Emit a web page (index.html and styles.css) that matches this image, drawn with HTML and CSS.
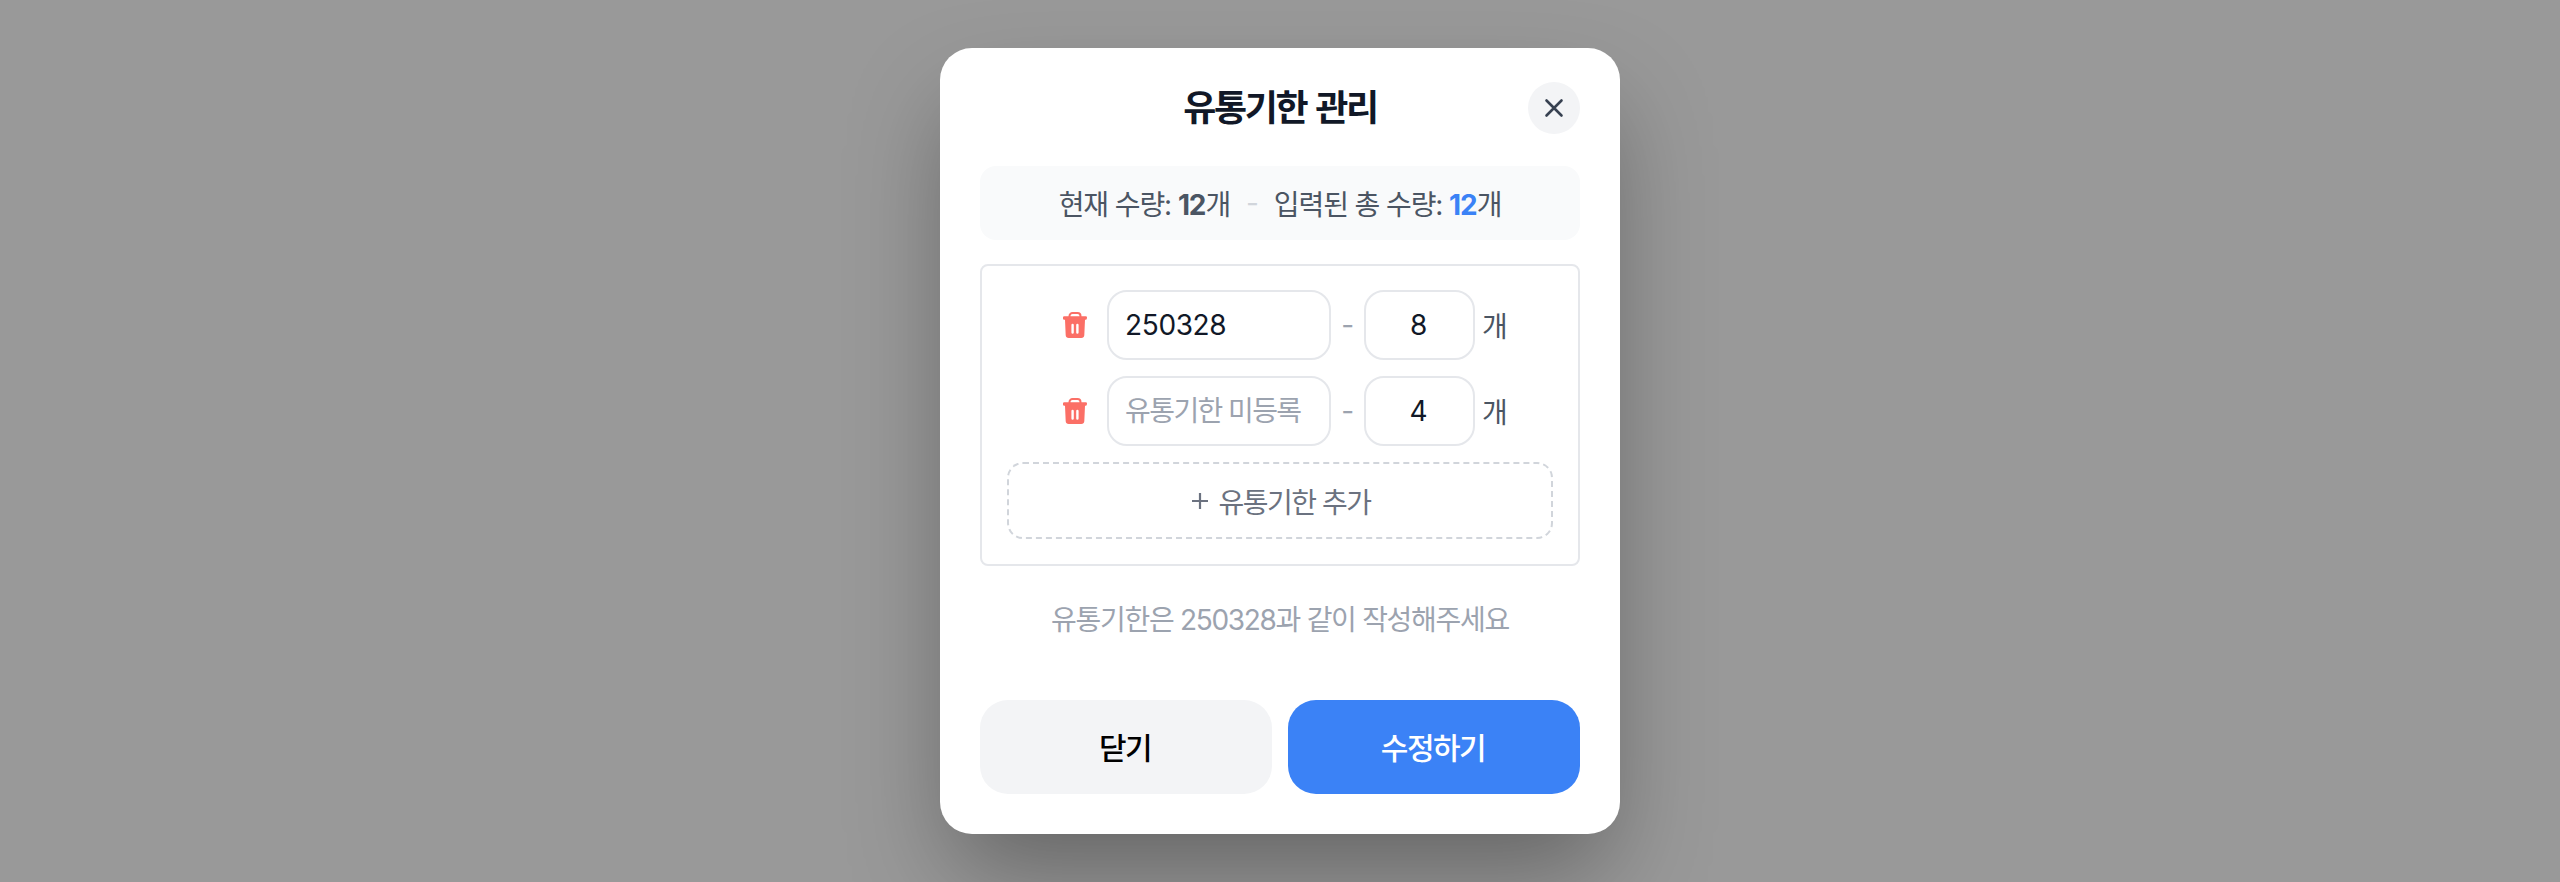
FILE: index.html
```html
<!DOCTYPE html>
<html lang="ko">

<head>
  <meta charset="UTF-8">
  <meta name="viewport" content="width=device-width, initial-scale=1.0">
  <title>유통기한 관리</title>
  <link rel="stylesheet" href="styles.css">
</head>

<body>
  <div class="overlay">
    <div class="modal">
      <header class="modal-header">
        <h2>유통기한 관리</h2>
        <button class="close-btn" aria-label="닫기">
          <svg width="24" height="24" viewBox="0 0 24 24" fill="none" stroke="#374151" stroke-width="2.6" stroke-linecap="round">
            <path d="M4.5 4.5 19.5 19.5M19.5 4.5 4.5 19.5" />
          </svg>
        </button>
      </header>

      <div class="summary">
        <span>현재 수량: <b>12</b>개</span>
        <span class="summary-sep">-</span>
        <span>입력된 총 수량: <b class="total">12</b>개</span>
      </div>

      <div class="date-box">
        <div class="date-row">
          <button class="trash-btn" aria-label="삭제">
            <svg width="24" height="27" viewBox="0 0 24 27">
              <path class="trash-handle" d="M6.5 5.5V4a3 3 0 0 1 3-3h5a3 3 0 0 1 3 3v1.5" />
              <path class="trash-body" fill-rule="evenodd" d="M1.2 4.2h21.6a1.2 1.2 0 0 1 1.2 1.3l-.2 1.2a1.2 1.2 0 0 1-1.1 1H22l-.7 15.6a3 3 0 0 1-3 2.7H5.7a3 3 0 0 1-3-2.7L2 7.7h-.9a1.2 1.2 0 0 1-1.1-1L0 5.500a1.200 1.200 0 0 1 1.200-1.300ZM8.400 13v7.500a1.200 1.200 0 0 0 2.400 0V13a1.200 1.200 0 0 0-2.400 0Zm4.800 0v7.500a1.200 1.200 0 0 0 2.400 0V13a1.200 1.200 0 0 0-2.400 0Z" />
            </svg>
          </button>
          <input class="date-input" type="text" value="250328" placeholder="유통기한 미등록">
          <span class="dash">-</span>
          <input class="qty-input" type="text" value="8">
          <span class="unit">개</span>
        </div>
        <div class="date-row">
          <button class="trash-btn" aria-label="삭제">
            <svg width="24" height="27" viewBox="0 0 24 27">
              <path class="trash-handle" d="M6.5 5.5V4a3 3 0 0 1 3-3h5a3 3 0 0 1 3 3v1.5" />
              <path class="trash-body" fill-rule="evenodd" d="M1.2 4.2h21.6a1.2 1.2 0 0 1 1.2 1.3l-.2 1.2a1.2 1.2 0 0 1-1.1 1H22l-.7 15.6a3 3 0 0 1-3 2.7H5.7a3 3 0 0 1-3-2.7L2 7.7h-.9a1.2 1.2 0 0 1-1.1-1L0 5.500a1.200 1.200 0 0 1 1.200-1.300ZM8.400 13v7.500a1.200 1.200 0 0 0 2.400 0V13a1.200 1.200 0 0 0-2.400 0Zm4.800 0v7.500a1.200 1.200 0 0 0 2.400 0V13a1.200 1.200 0 0 0-2.400 0Z" />
            </svg>
          </button>
          <input class="date-input" type="text" value="" placeholder="유통기한 미등록">
          <span class="dash">-</span>
          <input class="qty-input" type="text" value="4">
          <span class="unit">개</span>
        </div>
        <button class="add-btn">
          <svg width="20" height="20" viewBox="0 0 20 20" fill="none" stroke="#6b7280" stroke-width="2.2">
            <path d="M10 2V18M2 10H18" />
          </svg>
          유통기한 추가
        </button>
      </div>

      <p class="hint">유통기한은 250328과 같이 작성해주세요</p>

      <div class="actions">
        <button class="btn btn-close">닫기</button>
        <button class="btn btn-save">수정하기</button>
      </div>
    </div>
  </div>
</body>

</html>
```

FILE: styles.css
```css
/* Basic Reset */
* {
  margin: 0;
  padding: 0;
  box-sizing: border-box;
}

body {
  font-family: 'Inter', 'Noto Sans CJK KR', sans-serif;
  background-color: #fff;
}

button,
input {
  font-family: inherit;
}

/* Modal */
.overlay {
  height: 100vh;
  display: flex;
  align-items: center;
  justify-content: center;
  background-color: rgba(0, 0, 0, 0.4);
}

.modal {
  width: 680px;
  height: 786px;
  padding: 34px 40px 40px;
  background-color: #fff;
  border-radius: 32px;
  box-shadow: 0 48px 100px -12px rgba(0, 0, 0, 0.35);
  display: flex;
  flex-direction: column;
}

.modal-header {
  display: flex;
  align-items: center;
  justify-content: center;
  position: relative;
  height: 52px;
  margin-bottom: 32px;
}

.modal-header h2 {
  padding-bottom: 7px;
  font-size: 36px;
  font-weight: 700;
  letter-spacing: -2.4px;
  word-spacing: 3px;
  color: #111827;
}

.close-btn {
  position: absolute;
  right: 0;
  top: 0;
  width: 52px;
  height: 52px;
  border: none;
  border-radius: 50%;
  background-color: #f3f4f6;
  display: flex;
  align-items: center;
  justify-content: center;
}

/* Quantity summary */
.summary {
  height: 74px;
  margin-bottom: 24px;
  border-radius: 16px;
  background-color: #f9fafb;
  display: flex;
  align-items: center;
  justify-content: center;
  gap: 16px;
  font-size: 28px;
  letter-spacing: -1.1px;
  color: #4b5563;
}

.summary b {
  font-weight: 700;
}

.summary .total {
  color: #3b82f6;
}

.summary-sep {
  color: #d1d5db;
}

/* Date rows */
.date-box {
  height: 302px;
  border: 2px solid #e5e7eb;
  border-radius: 8px;
  padding: 24px 25px;
  display: flex;
  flex-direction: column;
  gap: 16px;
}

.date-row {
  display: flex;
  align-items: center;
  justify-content: center;
}

.trash-btn {
  width: 46px;
  height: 42px;
  margin-right: 9px;
  border: none;
  background: none;
  display: flex;
  align-items: center;
  justify-content: center;
}

.trash-handle {
  fill: none;
  stroke: #fb6f66;
  stroke-width: 2;
}

.trash-body {
  fill: #fb6f66;
}

.date-input,
.qty-input {
  height: 70px;
  border: 2px solid #e5e7eb;
  border-radius: 20px;
  font-size: 28px;
  color: #111827;
  outline: none;
  background-color: #fff;
}

.date-input {
  width: 224px;
  padding: 0 16px;
  letter-spacing: -0.4px;
}

.date-input::placeholder {
  color: #9ca3af;
  opacity: 1;
  letter-spacing: -1.6px;
}

.qty-input {
  width: 111px;
  padding-right: 2px;
  text-align: center;
}

.dash {
  width: 33px;
  text-align: center;
  font-size: 28px;
  color: #9ca3af;
}

.unit {
  margin-left: 7px;
  font-size: 28px;
  color: #4b5563;
}

.add-btn {
  height: 77px;
  border: 2px dashed #d1d5db;
  border-radius: 16px;
  background: none;
  display: flex;
  align-items: center;
  justify-content: center;
  gap: 9px;
  font-size: 28px;
  letter-spacing: -1.5px;
  color: #6b7280;
}

/* Hint */
.hint {
  margin-top: 33px;
  text-align: center;
  font-size: 28px;
  line-height: 42px;
  letter-spacing: -1.3px;
  color: #9ca3af;
}

/* Footer buttons */
.actions {
  margin-top: auto;
  display: flex;
  gap: 16px;
}

.btn {
  flex: 1;
  height: 94px;
  padding-bottom: 3px;
  padding-right: 2px;
  border: none;
  border-radius: 28px;
  font-size: 30px;
  font-weight: 550;
  letter-spacing: -1.5px;
}

.btn-close {
  background-color: #f3f4f6;
  color: #000;
}

.btn-save {
  background-color: #3b82f6;
  color: #fff;
}
```
